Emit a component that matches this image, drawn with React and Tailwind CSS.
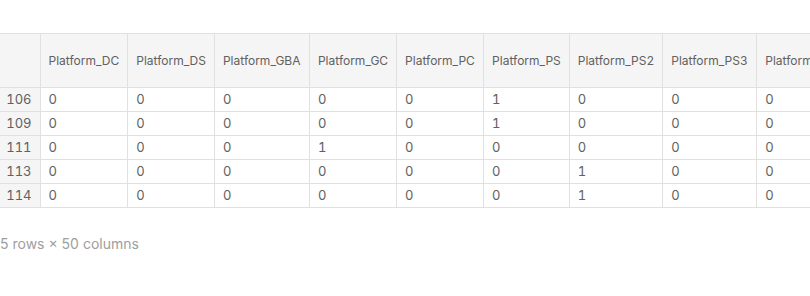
import React from 'react';

const columns = [
    { name: 'Platform_DC', w: 'w-[87px]' },
    { name: 'Platform_DS', w: 'w-[86px]' },
    { name: 'Platform_GBA', w: 'w-[95px]' },
    { name: 'Platform_GC', w: 'w-[87px]' },
    { name: 'Platform_PC', w: 'w-[87px]' },
    { name: 'Platform_PS', w: 'w-[85px]' },
    { name: 'Platform_PS2', w: 'w-[93px]' },
    { name: 'Platform_PS3', w: 'w-[94px]' },
    { name: 'Platform_PS4', w: 'w-[94px]' },
    { name: 'Platform_PSP', w: 'w-[94px]' },
];

const rows = [
    { idx: 106, vals: [0, 0, 0, 0, 0, 1, 0, 0, 0, 0] },
    { idx: 109, vals: [0, 0, 0, 0, 0, 1, 0, 0, 0, 0] },
    { idx: 111, vals: [0, 0, 0, 1, 0, 0, 0, 0, 0, 0] },
    { idx: 113, vals: [0, 0, 0, 0, 0, 0, 1, 0, 0, 0] },
    { idx: 114, vals: [0, 0, 0, 0, 0, 0, 1, 0, 0, 0] },
];

const App = () => {
    return (
        <div className="w-[810px] h-[296px] bg-white overflow-hidden font-['Inter',sans-serif] text-[#616161]">
            <div className="pt-[33px] overflow-hidden">
                <table className="border-collapse text-[12px] tabular-nums w-max">
                    <thead>
                        <tr className="h-[54px] bg-[#f5f5f5]">
                            <th className="w-[40px] border border-[#e0e0e0] border-l-0"></th>
                            {columns.map((col) => (
                                <th
                                    key={col.name}
                                    className={`${col.w} border border-[#e0e0e0] px-2 text-left font-normal whitespace-nowrap`}
                                >
                                    {col.name}
                                </th>
                            ))}
                        </tr>
                    </thead>
                    <tbody>
                        {rows.map((row) => (
                            <tr key={row.idx} className="h-[24px]">
                                <td className="border border-[#e0e0e0] border-l-0 bg-[#f5f5f5] pl-1 pr-2 text-right text-[13px]">
                                    {row.idx}
                                </td>
                                {row.vals.map((v, i) => (
                                    <td key={i} className="border border-[#e0e0e0] px-2 text-left text-[13px]">
                                        {v}
                                    </td>
                                ))}
                            </tr>
                        ))}
                    </tbody>
                </table>
            </div>
            <p className="mt-[26px] text-[14px] leading-5 text-[#9e9e9e]">5 rows × 50 columns</p>
        </div>
    );
};

export default App;
